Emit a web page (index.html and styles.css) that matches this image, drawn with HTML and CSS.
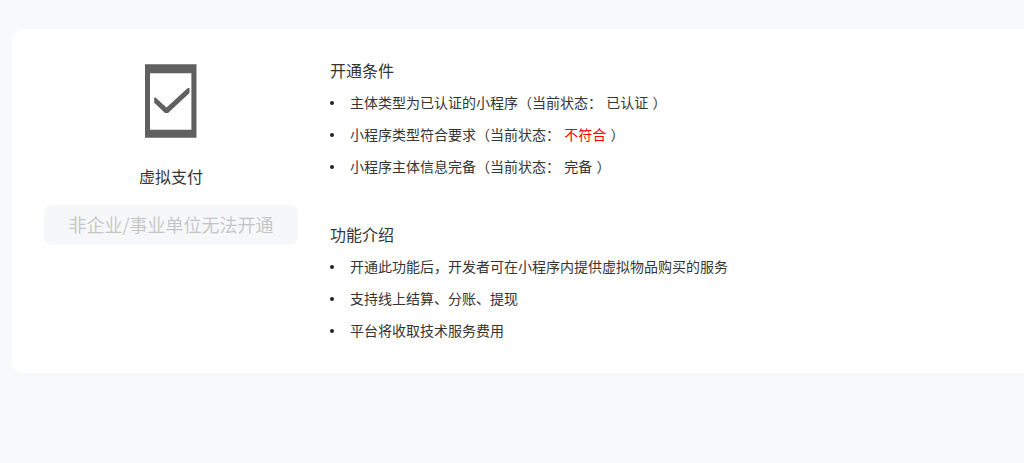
FILE: index.html
```html
<!DOCTYPE html>
<html lang="zh-CN">
<head>
    <meta charset="UTF-8">
    <meta name="viewport" content="width=device-width, initial-scale=1.0">
    <title>虚拟支付</title>
    <link rel="stylesheet" href="styles.css">
</head>
<body>
    <div class="card">
        <div class="product">
            <svg class="product-icon" width="54" height="76" viewBox="0 0 54 76">
                <path fill="#606060" fill-rule="evenodd" d="M1 1.2h51.5v73.6H1zM6 10.2v56.5h41.4V10.2z"/>
                <path fill="#606060" d="M10.2 34.7l1.3-.2L22.5 44.6 43.8 25.1h1.7V30L24 50h-3L10.2 39.8z"/>
            </svg>
            <div class="product-name">虚拟支付</div>
            <button class="open-btn" disabled>非企业/事业单位无法开通</button>
        </div>
        <div class="detail">
            <div class="section">
                <h3>开通条件</h3>
                <ul>
                    <li>主体类型为已认证的小程序（当前状态： <span>已认证</span> ）</li>
                    <li>小程序类型符合要求（当前状态： <span class="fail">不符合</span> ）</li>
                    <li>小程序主体信息完备（当前状态： <span>完备</span> ）</li>
                </ul>
            </div>
            <div class="section">
                <h3>功能介绍</h3>
                <ul>
                    <li>开通此功能后，开发者可在小程序内提供虚拟物品购买的服务</li>
                    <li>支持线上结算、分账、提现</li>
                    <li>平台将收取技术服务费用</li>
                </ul>
            </div>
        </div>
    </div>
</body>
</html>
```
FILE: styles.css
```css
body {
    margin: 0;
    padding: 29px 0 0 12px;
    background-color: #f8f9fb;
    color: #353535;
    font-family: "Noto Sans CJK SC", sans-serif;
    font-size: 14px;
}
.card {
    display: flex;
    gap: 32px;
    box-sizing: border-box;
    height: 344px;
    padding: 25px 32px;
    background-color: #fff;
    border-radius: 12px 0 0 12px;
}
.product {
    display: flex;
    flex-direction: column;
    align-items: center;
    width: 254px;
    flex-shrink: 0;
}
.product-icon {
    margin-top: 9px;
}
.product-name {
    margin-top: 25px;
    font-size: 16px;
    line-height: 24px;
}
.open-btn {
    width: 254px;
    height: 40px;
    margin-top: 17px;
    padding: 0 0 2px;
    border: none;
    border-radius: 8px;
    background-color: #f6f7f9;
    color: #c4c4c4;
    font-family: inherit;
    font-size: 18px;
    font-weight: 350;
    white-space: nowrap;
}

/* Right column */
.section {
    margin-bottom: 36px;
}
h3 {
    margin: 0;
    font-size: 16px;
    font-weight: 400;
    line-height: 32px;
}
ul {
    margin: 0;
    padding: 0;
    list-style: none;
}
li {
    display: flex;
    align-items: center;
    line-height: 32px;
    white-space: pre;
    word-spacing: 1.1px;
}
li::before {
    content: "";
    width: 4px;
    height: 4px;
    margin: 2px 16px 0 0;
    border-radius: 50%;
    background-color: #222;
}
.fail {
    color: #f00;
}
```
